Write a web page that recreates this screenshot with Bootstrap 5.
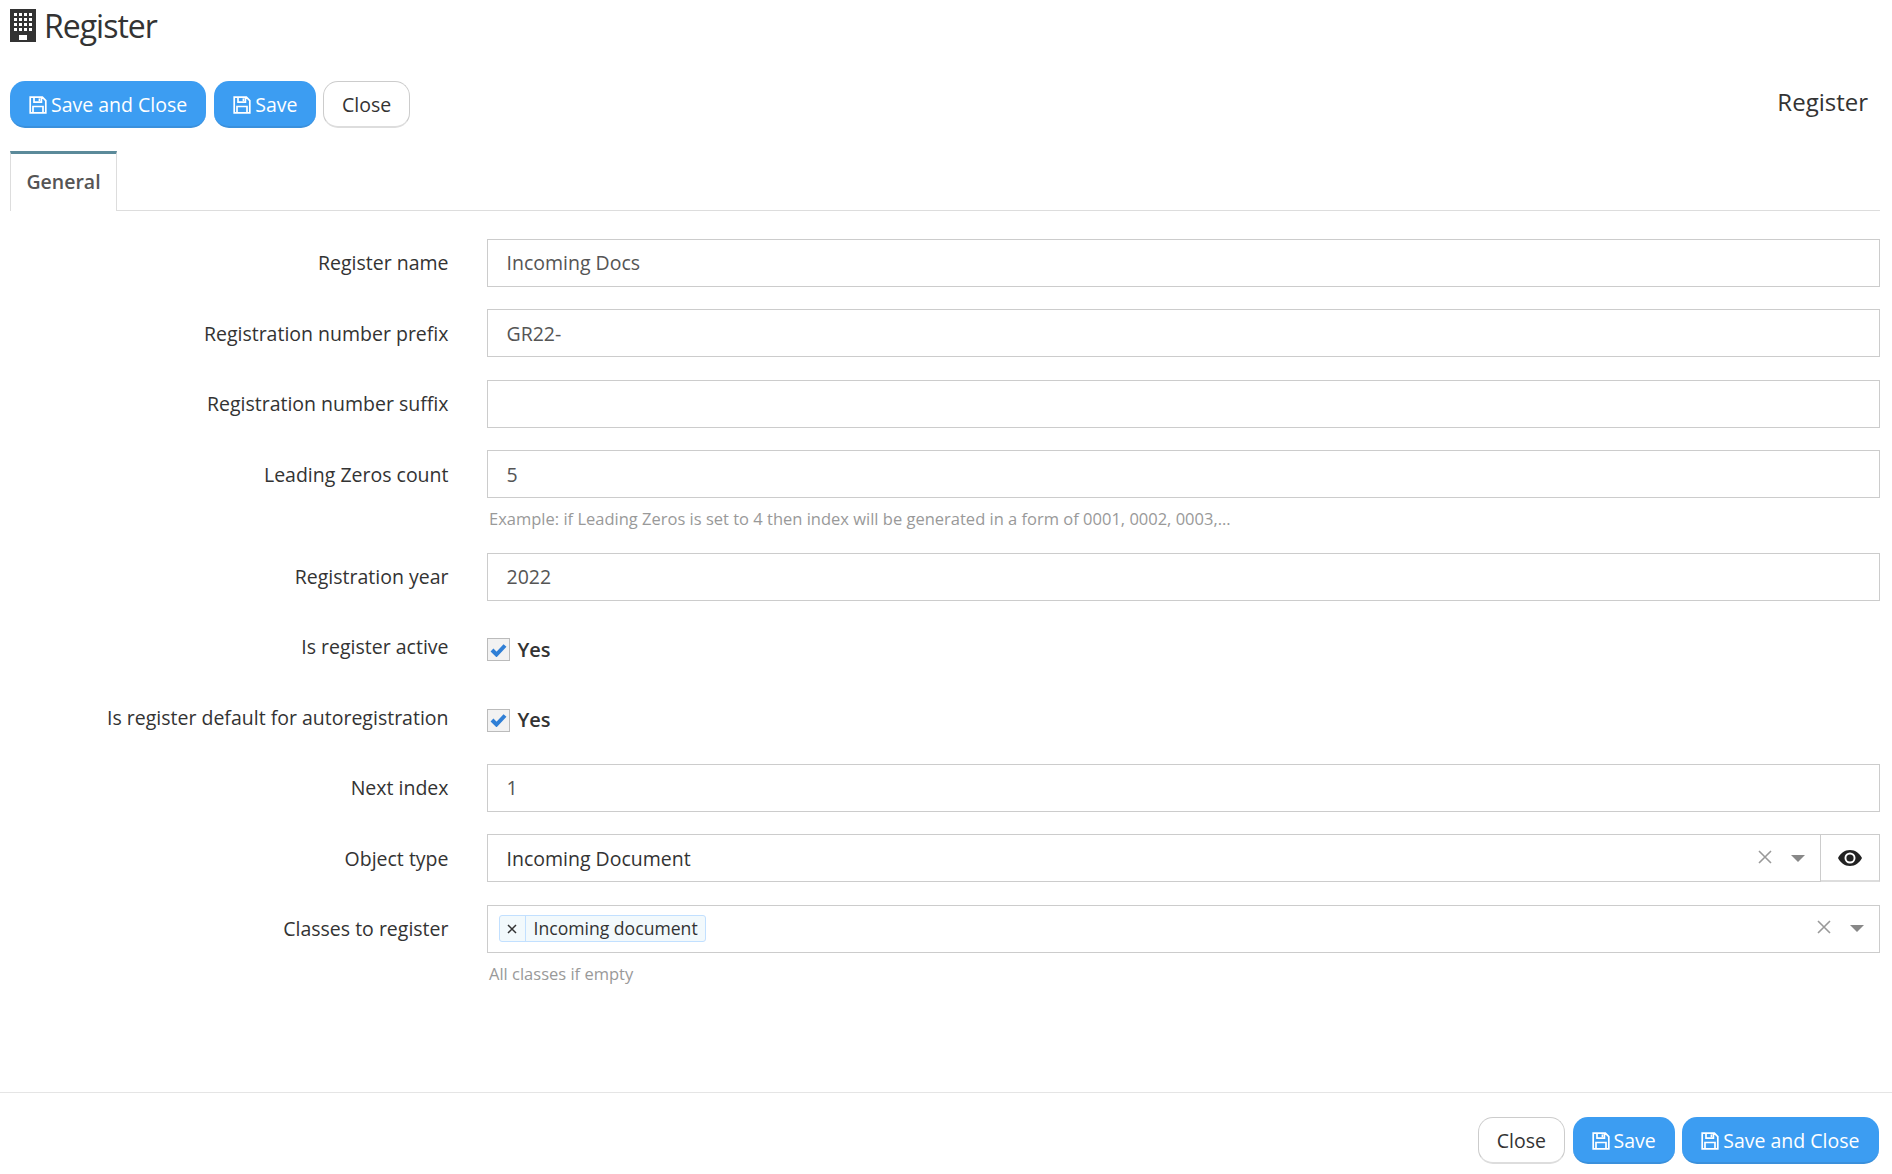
<!DOCTYPE html>
<html lang="en"><head><meta charset="utf-8"><title>Register</title>
<link href="https://cdn.jsdelivr.net/npm/bootstrap@5.3.0/dist/css/bootstrap.min.css" rel="stylesheet">
<style>
html,body{height:100%}
body{font-family:"Open Sans",sans-serif;font-size:18px;color:#333;background:#fff;width:1892px;height:1174px;overflow:hidden;display:flex;flex-direction:column}
.page-main{flex:1 1 auto;padding:0 12px 0 10px}
.ttl{font-size:32px;font-weight:400;letter-spacing:-1px;color:#333;margin:0;height:51px;display:flex;align-items:center;gap:8px;line-height:1}
.ttl svg{width:26px;height:33px;flex:none}
.act-bar{margin-top:30px;height:47px}
.act-name{font-size:24px;color:#333;margin-right:12px;line-height:1;margin-top:-5px}
.bt{font-size:19.5px;height:47px;border-radius:15px;padding:2px 19px 0;display:inline-flex;align-items:center;gap:4px;line-height:1;font-family:"Open Sans",sans-serif}
.bt svg{width:18px;height:18px;flex:none}
.bt-blue{background:#3c9df2;border:0;border-bottom:2px solid #3a90dc;color:#fff}
.bt-white{background:#fff;border:1px solid #ccc;border-bottom:2px solid #ddd;color:#333;padding:1px 17.5px 0;margin-left:-1px}
.foot .bt-white{margin-left:0}
.foot .bt-mid{margin-right:-1px}
.foot .bt-last{padding-left:19.5px;padding-right:19.5px}
.tabs-line{margin-top:23px;height:60px;border-bottom:1px solid #ddd}
.tab-on{width:107px;height:60px;border:1px solid #ddd;border-top:3px solid #5b8a9a;border-bottom:0;background:#fff;font-weight:600;font-size:19.5px;color:#555;display:flex;align-items:center;justify-content:center;padding-bottom:2px}
.frm{margin-top:28px}
.frow{display:flex;align-items:flex-start;margin-bottom:22.4px}
.lbl{width:438.5px;margin-right:38px;padding-top:.4px;margin-bottom:-.4px;text-align:right;font-size:19.5px;line-height:48px;color:#333;flex:none;white-space:nowrap}
.fld{flex:1 1 auto;min-width:0}
.inp{display:flex;align-items:center;height:48px;width:100%;border:1px solid #ccc;background:#fff;padding:0 19px;font-size:19.5px;color:#555;border-radius:0;box-shadow:none}
.hint{font-size:16.5px;color:#999;margin:9px 0 0 2.5px;line-height:23px}
.chk{height:48px;display:flex;align-items:center;gap:8px;font-weight:600;font-size:20px;padding-top:6px}
.chkbox{width:23px;height:23px;border:1px solid #bbb;background:#f2f2f2;display:flex;align-items:center;justify-content:center}
.chkbox svg{width:17px;height:14px}
.sel{display:flex;align-items:center;height:48px;border:1px solid #ccc;background:#fff;padding:0 0 0 19px;font-size:19.5px;color:#333;flex:1 1 auto;min-width:0}
.sel-txt{flex:1 1 auto;display:flex;align-items:center}
.sel-x{width:16px;height:16px;flex:none;margin-right:18px;margin-top:-3px}
.caret{width:0;height:0;flex:none;border-left:7px solid transparent;border-right:7px solid transparent;border-top:7px solid #888;margin-right:15px}
.eye-bt{width:59px;height:48px;border:1px solid #ccc;border-left:0;border-bottom:2px solid #ddd;display:flex;align-items:center;justify-content:center;background:#fff;flex:none}
.eye-bt svg{width:24px;height:16px}
.pill{display:inline-flex;align-items:stretch;height:27px;border:1px solid #c2e0ff;border-radius:3px;background:#f2f9fc;font-size:17.6px;color:#333;line-height:25px}
.pill-x{width:26px;border-right:1px solid #c2e0ff;display:flex;align-items:center;justify-content:center}
.pill-x svg{width:10px;height:10px}
.pill-t{padding:0 7px 0 8px}
.sel-m{padding-left:11px}
.foot{height:82px;border-top:1px solid #e5e5e5;padding:22px 13px 0 0;flex:none}
.foot .bt{margin-top:2px}
</style></head>
<body>
<svg width="0" height="0" class="position-absolute"><defs>
<symbol id="floppy" viewBox="0 0 18 18"><path fill="none" stroke="currentColor" stroke-width="1.7" d="M1.800 1.200h11.600l3.400 3.400v12.200H1.200V1.200zM5 1.200v5h7.400v-5M4 16.800v-6.300h10v6.300"/><path fill="currentColor" d="M9.600 2.400h1.600v2.800H9.600z"/></symbol>
</defs></svg>
<div class="page-main">
<h1 class="ttl"><svg viewBox="0 0 26 33"><path fill="#333" d="M0 0h26v33H0z"/><g fill="#fff"><path d="M4 4h3v3H4zM9 4h3v3H9zM14 4h3v3h-3zM19 4h3v3h-3zM4 9h3v3H4zM9 9h3v3H9zM14 9h3v3h-3zM19 9h3v3h-3zM4 14h3v3H4zM9 14h3v3H9zM14 14h3v3h-3zM19 14h3v3h-3zM4 19h3v3H4zM9 19h3v3H9zM14 19h3v3h-3zM19 19h3v3h-3zM9 26h8v5H9z"/></g></svg>Register</h1>
<div class="act-bar d-flex justify-content-between align-items-center">
<div class="d-flex gap-2">
<button class="bt bt-blue" type="button"><svg><use href="#floppy"/></svg>Save and Close</button>
<button class="bt bt-blue" type="button"><svg><use href="#floppy"/></svg>Save</button>
<button class="bt bt-white" type="button">Close</button>
</div>
<div class="act-name">Register</div>
</div>
<div class="tabs-line"><div class="tab-on">General</div></div>
<div class="frm">
<div class="frow"><label class="lbl">Register name</label><div class="fld"><div class="inp">Incoming Docs</div></div></div>
<div class="frow"><label class="lbl">Registration number prefix</label><div class="fld"><div class="inp">GR22-</div></div></div>
<div class="frow"><label class="lbl">Registration number suffix</label><div class="fld"><div class="inp"></div></div></div>
<div class="frow"><label class="lbl">Leading Zeros count</label><div class="fld"><div class="inp">5</div><div class="hint">Example: if Leading Zeros is set to 4 then index will be generated in a form of 0001, 0002, 0003,...</div></div></div>
<div class="frow"><label class="lbl">Registration year</label><div class="fld"><div class="inp">2022</div></div></div>
<div class="frow"><label class="lbl">Is register active</label><div class="fld"><div class="chk"><span class="chkbox"><svg viewBox="0 0 17 14"><path fill="none" stroke="#2f7fd6" stroke-width="4" d="M2 7l4.500 4.500L15 2.500"/></svg></span>Yes</div></div></div>
<div class="frow"><label class="lbl">Is register default for autoregistration</label><div class="fld"><div class="chk"><span class="chkbox"><svg viewBox="0 0 17 14"><path fill="none" stroke="#2f7fd6" stroke-width="4" d="M2 7l4.500 4.500L15 2.500"/></svg></span>Yes</div></div></div>
<div class="frow"><label class="lbl">Next index</label><div class="fld"><div class="inp">1</div></div></div>
<div class="frow"><label class="lbl">Object type</label><div class="fld d-flex"><div class="sel"><span class="sel-txt">Incoming Document</span><svg class="sel-x" viewBox="0 0 16 16"><path stroke="#999" stroke-width="1.600" d="M2 2l12 12M14 2L2 14"/></svg><span class="caret"></span></div><div class="eye-bt"><svg viewBox="0 0 24 16"><path fill="#222" fill-rule="evenodd" d="M12 0C6.500 0 2.500 3.500 0 8c2.500 4.500 6.500 8 12 8s9.500-3.500 12-8c-2.500-4.500-6.500-8-12-8zM12 2.500a5.500 5.500 0 1 1 0 11a5.500 5.500 0 0 1 0-11z"/><circle cx="12" cy="8" r="3.600" fill="#222"/></svg></div></div></div>
<div class="frow"><label class="lbl">Classes to register</label><div class="fld"><div class="sel sel-m"><span class="sel-txt"><span class="pill"><span class="pill-x"><svg viewBox="0 0 10 10"><path stroke="#333" stroke-width="1.500" d="M1 1l8 8M9 1L1 9"/></svg></span><span class="pill-t">Incoming document</span></span></span><svg class="sel-x" viewBox="0 0 16 16"><path stroke="#999" stroke-width="1.600" d="M2 2l12 12M14 2L2 14"/></svg><span class="caret"></span></div><div class="hint">All classes if empty</div></div></div>
</div>
</div>
<div class="foot d-flex justify-content-end gap-2">
<button class="bt bt-white" type="button">Close</button>
<button class="bt bt-blue bt-mid" type="button"><svg><use href="#floppy"/></svg>Save</button>
<button class="bt bt-blue bt-last" type="button"><svg><use href="#floppy"/></svg>Save and Close</button>
</div>
<script src="https://cdn.jsdelivr.net/npm/bootstrap@5.3.0/dist/js/bootstrap.bundle.min.js"></script>
</body></html>
